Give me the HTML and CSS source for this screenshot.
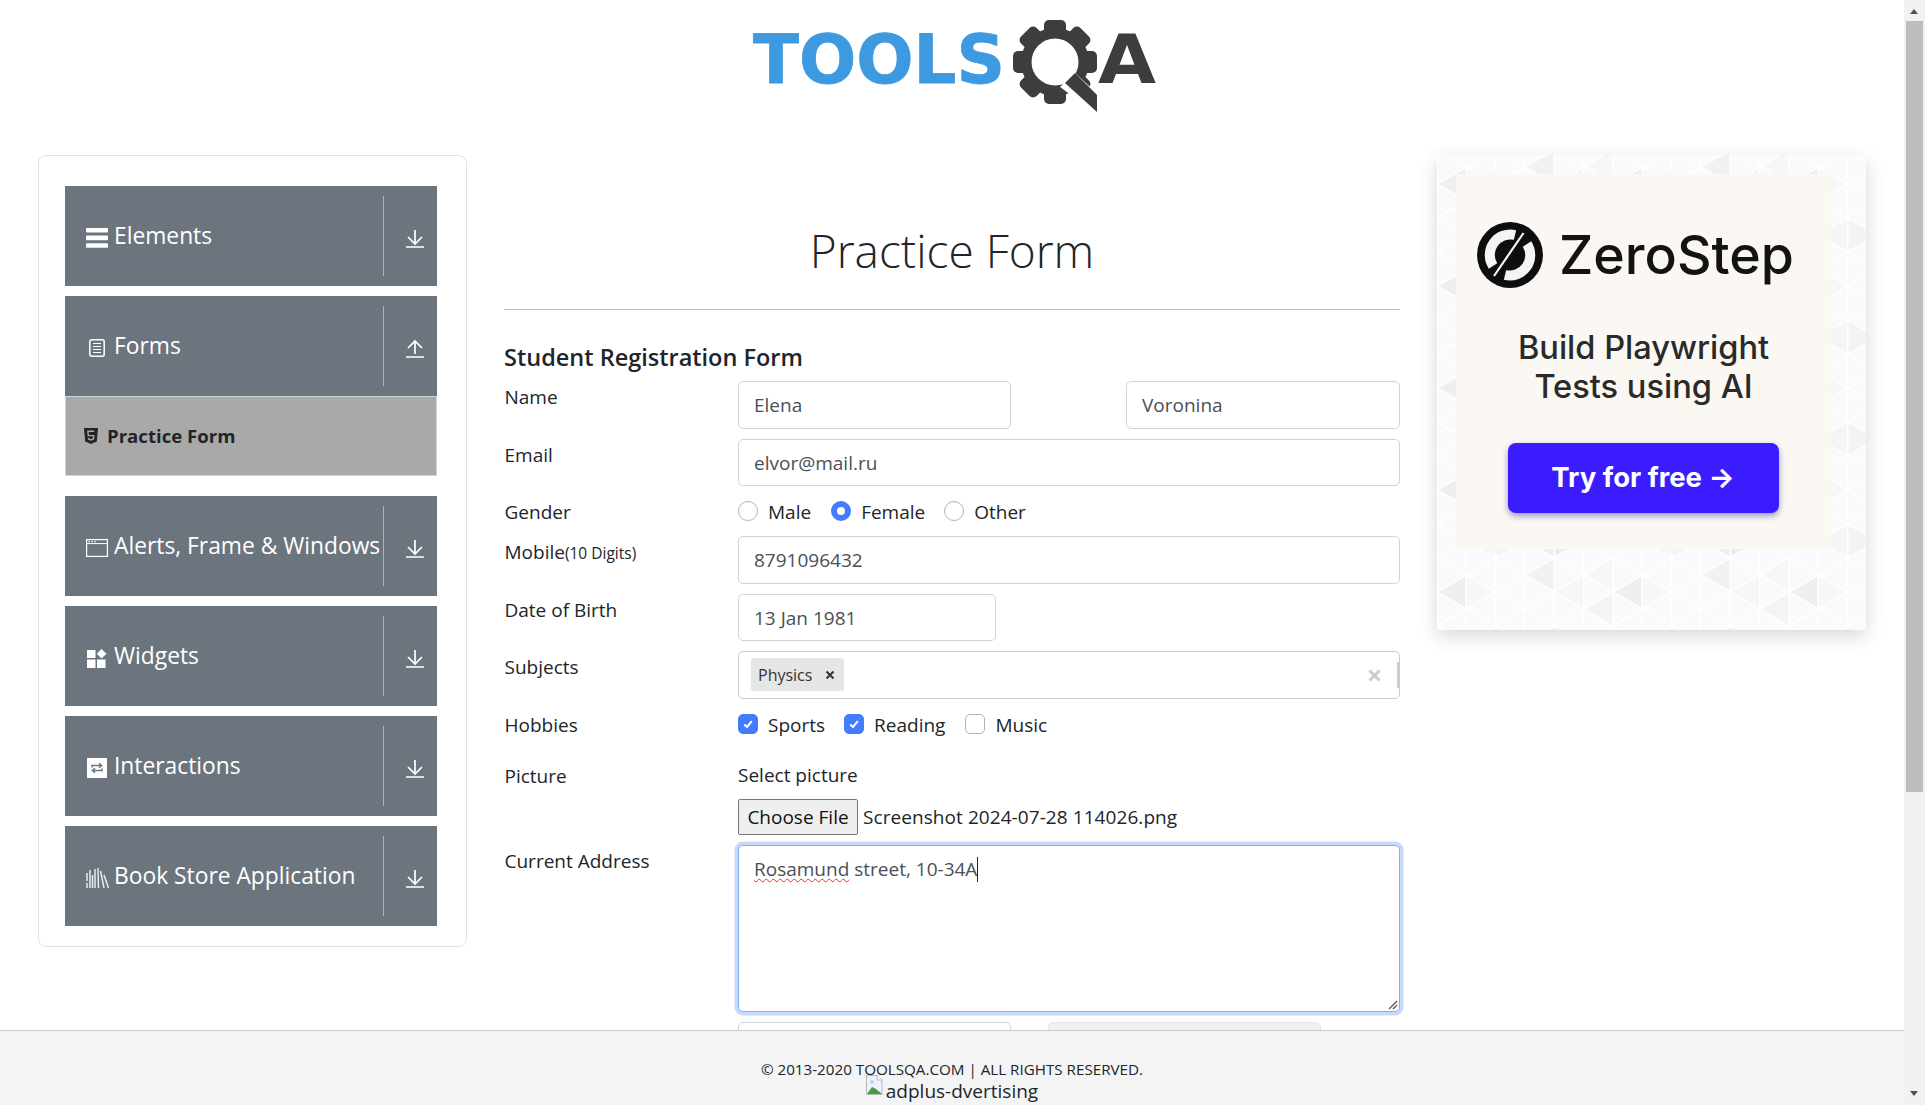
FILE: index.html
```html
<!DOCTYPE html>
<html lang="en">
<head>
<meta charset="utf-8">
<title>ToolsQA Practice Form</title>
<link rel="stylesheet" href="styles.css">
</head>
<body>
<div class="page">
  <header class="site-header">
    <svg class="logo" viewBox="0 0 420 125" width="420" height="125" aria-label="ToolsQA">
      <text class="logo-tools" x="11" y="83" textLength="252" lengthAdjust="spacingAndGlyphs">TOOLS</text>
      <g fill="#3d3d3d">
        <g id="teeth">
          <rect x="302" y="20" width="22" height="84" rx="5"/>
          <rect x="302" y="20" width="22" height="84" rx="5" transform="rotate(45 313 62)"/>
          <rect x="302" y="20" width="22" height="84" rx="5" transform="rotate(90 313 62)"/>
          <rect x="302" y="20" width="22" height="84" rx="5" transform="rotate(135 313 62)"/>
        </g>
        <circle cx="313" cy="62" r="34"/>
      </g>
      <circle cx="313" cy="62" r="23.5" fill="#fff"/>
      <polygon points="318,87 332,72 360,98 360,118" fill="#fff"/>
      <polygon points="323,83 333,73 355,95 355,112" fill="#3d3d3d"/>
      <text class="logo-a" x="356" y="83" textLength="58" lengthAdjust="spacingAndGlyphs">A</text>
    </svg>
  </header>

  <main class="layout">
    <nav class="sidebar">
      <div class="nav-item">
        <span class="nav-icon">
          <svg width="22" height="20" viewBox="0 0 22 20"><rect y="0" width="22" height="4.6" rx="1" fill="#fff"/><rect y="7.6" width="22" height="4.6" rx="1" fill="#fff"/><rect y="15.2" width="22" height="4.6" rx="1" fill="#fff"/></svg>
        </span>
        <span class="nav-label">Elements</span>
        <span class="nav-toggle">
          <svg class="arrow" width="18" height="19" viewBox="0 0 18 19"><path d="M0 18H18M9 1V14.5M2 8L9 15L16 8"/></svg>
        </span>
      </div>

      <div class="nav-item nav-item-open">
        <span class="nav-icon">
          <svg width="16" height="18" viewBox="0 0 16 18"><rect x=".8" y=".8" width="14.4" height="16.4" rx="2" fill="none" stroke="#fff" stroke-width="1.5"/><path d="M4 4.5H12M4 7.5H12M4 10.5H12M4 13.5H12" stroke="#fff" stroke-width="1"/></svg>
        </span>
        <span class="nav-label">Forms</span>
        <span class="nav-toggle">
          <svg class="arrow" width="18" height="19" viewBox="0 0 18 19"><path d="M0 18H18M9 15V2M2 9L9 2L16 9"/></svg>
        </span>
      </div>
      <div class="nav-sub">
        <svg width="14" height="16" viewBox="0 0 14 16"><path d="M0 0H14L12.8 13.4L7 16L1.2 13.4Z" fill="#212529"/><path d="M10.2 3.2H3.9L4.3 7.6H9.8L9.4 11L7 11.9L4.6 11L4.5 9.8" fill="none" stroke="#a9a9a9" stroke-width="1.4"/></svg>
        <span class="nav-sub-label">Practice Form</span>
      </div>

      <div class="nav-item nav-item-spaced">
        <span class="nav-icon">
          <svg width="22" height="18" viewBox="0 0 22 18"><rect x=".6" y=".6" width="20.8" height="16.8" fill="none" stroke="#fff" stroke-width="1.2"/><path d="M.6 4.6H21.4" stroke="#fff" stroke-width="1"/><path d="M2.5 2.6H4M5.5 2.6H7M8.5 2.6H10" stroke="#fff" stroke-width="1.2"/></svg>
        </span>
        <span class="nav-label">Alerts, Frame &amp; Windows</span>
        <span class="nav-toggle">
          <svg class="arrow" width="18" height="19" viewBox="0 0 18 19"><path d="M0 18H18M9 1V14.5M2 8L9 15L16 8"/></svg>
        </span>
      </div>

      <div class="nav-item">
        <span class="nav-icon">
          <svg width="20" height="19" viewBox="0 0 20 19"><rect y="1" width="8.5" height="8" fill="#fff"/><rect y="10.5" width="8.5" height="8.5" fill="#fff"/><rect x="10" y="10.5" width="8.5" height="8.5" fill="#fff"/><path d="M14.5 0L19.5 4.8L14.5 9.6L9.8 4.8Z" fill="#fff"/></svg>
        </span>
        <span class="nav-label">Widgets</span>
        <span class="nav-toggle">
          <svg class="arrow" width="18" height="19" viewBox="0 0 18 19"><path d="M0 18H18M9 1V14.5M2 8L9 15L16 8"/></svg>
        </span>
      </div>

      <div class="nav-item">
        <span class="nav-icon">
          <svg width="20" height="20" viewBox="0 0 20 20"><rect width="20" height="20" fill="#fff"/><path d="M5 9.5V7.5H14M12 5.3L14.6 7.5L12 9.7M15 10.5V12.5H6M8 10.3L5.4 12.5L8 14.7" fill="none" stroke="#6c757d" stroke-width="1.5"/></svg>
        </span>
        <span class="nav-label">Interactions</span>
        <span class="nav-toggle">
          <svg class="arrow" width="18" height="19" viewBox="0 0 18 19"><path d="M0 18H18M9 1V14.5M2 8L9 15L16 8"/></svg>
        </span>
      </div>

      <div class="nav-item">
        <span class="nav-icon">
          <svg width="23" height="20" viewBox="0 0 23 20"><path d="M1 5V13M1 15V20M4 2V20M6.5 7V20M9 1V20M12 0L12.5 20M14.5 3L18 20M18 7L22.5 20" fill="none" stroke="#e8eaec" stroke-width="1.5"/></svg>
        </span>
        <span class="nav-label">Book Store Application</span>
        <span class="nav-toggle">
          <svg class="arrow" width="18" height="19" viewBox="0 0 18 19"><path d="M0 18H18M9 1V14.5M2 8L9 15L16 8"/></svg>
        </span>
      </div>
    </nav>

    <section class="content">
      <h1 class="page-title">Practice Form</h1>
      <hr class="title-rule">
      <h5 class="form-title">Student Registration Form</h5>
      <form class="form">
        <div class="row">
          <label class="row-label">Name</label>
          <div class="name-pair">
            <input class="field name-field" type="text" value="Elena">
            <input class="field name-field-last" type="text" value="Voronina">
          </div>
        </div>
        <div class="row">
          <label class="row-label">Email</label>
          <input class="field" type="text" value="elvor@mail.ru">
        </div>
        <div class="row row-compact">
          <span class="row-label">Gender</span>
          <div class="options">
            <span class="option option-male"><i class="radio"></i>Male</span>
            <span class="option option-female"><i class="radio radio-on"></i>Female</span>
            <span class="option"><i class="radio"></i>Other</span>
          </div>
        </div>
        <div class="row">
          <label class="row-label">Mobile<small class="hint">(10 Digits)</small></label>
          <input class="field" type="text" value="8791096432">
        </div>
        <div class="row">
          <label class="row-label">Date of Birth</label>
          <input class="field date-field" type="text" value="13 Jan 1981">
        </div>
        <div class="row">
          <label class="row-label">Subjects</label>
          <div class="subjects">
            <span class="chip">Physics<svg class="chip-x" width="10" height="10" viewBox="0 0 10 10"><path d="M1.5 1.5L8.5 8.5M8.5 1.5L1.5 8.5" stroke="#333" stroke-width="2"/></svg></span>
            <svg class="clear-x" width="13" height="13" viewBox="0 0 13 13"><path d="M1.5 1.5L11.5 11.5M11.5 1.5L1.5 11.5" stroke="#ccc" stroke-width="3"/></svg>
            <i class="subjects-sep"></i>
          </div>
        </div>
        <div class="row row-hobbies">
          <span class="row-label">Hobbies</span>
          <div class="options">
            <span class="option option-sports"><i class="check check-on"><svg width="14" height="14" viewBox="0 0 14 14"><path d="M3.2 7.4L6 10L10.8 4.2" fill="none" stroke="#fff" stroke-width="2"/></svg></i>Sports</span>
            <span class="option option-reading"><i class="check check-on"><svg width="14" height="14" viewBox="0 0 14 14"><path d="M3.2 7.4L6 10L10.8 4.2" fill="none" stroke="#fff" stroke-width="2"/></svg></i>Reading</span>
            <span class="option"><i class="check"></i>Music</span>
          </div>
        </div>
        <div class="row row-picture">
          <span class="row-label">Picture</span>
          <div class="picture">
            <span class="picture-title">Select picture</span>
            <div class="file-line">
              <button class="file-button" type="button">Choose File</button>
              <span class="file-name">Screenshot 2024-07-28 114026.png</span>
            </div>
          </div>
        </div>
        <div class="row">
          <label class="row-label">Current Address</label>
          <div class="address">
            <span class="misspelled">Rosamund</span> street, 10-34A<i class="caret"></i>
            <svg class="grip" width="12" height="12" viewBox="0 0 12 12"><path d="M11 3L3 11M11 7L7 11" stroke="#555" stroke-width="1.2"/></svg>
          </div>
        </div>
        <div class="row">
          <span class="row-label"></span>
          <div class="state-pair">
            <div class="state-box"></div>
            <div class="state-box state-box-off"></div>
          </div>
        </div>
      </form>
    </section>

    <aside class="banner">
      <svg class="banner-pattern" width="429" height="475" aria-hidden="true">
        <defs>
          <pattern id="tri" width="176" height="102" patternUnits="userSpaceOnUse" y="-5">
            <rect width="176" height="102" fill="#fafafa"/>
            <polygon points="0,34 29.3,17 29.3,51" fill="#efefef"/>
            <polygon points="29.3,85 58.7,68 58.7,102" fill="#f5f5f5"/>
            <polygon points="58.7,68 88,85 58.7,102" fill="#f3f3f3"/>
            <polygon points="88,17 117.3,0 117.3,34" fill="#f1f1f1"/>
            <polygon points="117.3,34 146.7,17 146.7,51" fill="#f6f6f6"/>
            <polygon points="88,85 117.3,68 117.3,102" fill="#eeeeee"/>
            <polygon points="117.3,68 146.7,85 117.3,102" fill="#eeeeee"/>
            <polygon points="146.7,51 176,34 176,68" fill="#f4f4f4"/>
            <polygon points="146.7,17 176,0 176,34" fill="#f7f7f7"/>
            <polygon points="29.3,17 58.7,34 29.3,51" fill="#f7f7f7"/>
            <path d="M0 0V102M29.3 0V102M58.7 0V102M88 0V102M117.3 0V102M146.7 0V102M176 0V102M0 0L176 102M0 68L58.7 102M0 34L117.3 102M58.7 0L176 68M117.3 0L176 34M0 34L58.7 0M0 68L117.3 0M0 102L176 0M58.7 102L176 34M117.3 102L176 68" fill="none" stroke="#fff" stroke-width="1.6"/>
          </pattern>
        </defs>
        <rect width="429" height="475" fill="url(#tri)"/>
      </svg>
      <div class="ad-card">
        <div class="ad-brand">
          <svg width="66" height="66" viewBox="0 0 66 66">
            <circle cx="33" cy="33" r="33" fill="#0e0e0e"/>
            <path d="M38 13A20.500 20.500 0 0 0 16 44" fill="none" stroke="#f4f4f2" stroke-width="10"/>
            <path d="M28 53A20.500 20.500 0 0 0 50 22" fill="none" stroke="#f4f4f2" stroke-width="10"/>
            <path d="M48 10L18 56" stroke="#0e0e0e" stroke-width="7"/>
            <path d="M46.500 11L17 54" stroke="#f4f4f2" stroke-width="2.200"/>
          </svg>
          <span class="ad-name">ZeroStep</span>
        </div>
        <p class="ad-copy">Build Playwright<br>Tests using AI</p>
        <span class="ad-button">Try for free →</span>
      </div>
    </aside>
  </main>

  <footer class="site-footer">
    <span class="copyright">© 2013-2020 TOOLSQA.COM | ALL RIGHTS RESERVED.</span>
    <span class="ad-alt">
      <svg class="broken-image" width="20" height="20" viewBox="0 0 20 20"><path d="M.5 .5H11L16 5V19.500H.5Z" fill="#eef3fb" stroke="#b5b8bd"/><path d="M11 .5V5H16" fill="#fff" stroke="#b5b8bd"/><path d="M1 19L6 12L10 14L16 19Z" fill="#4a9e38"/><circle cx="6" cy="7" r="2" fill="#b9d3f5"/></svg>adplus-dvertising
    </span>
  </footer>
</div>
<div class="scrollbar" aria-hidden="true">
  <i class="sb-up"></i>
  <i class="sb-thumb"></i>
  <i class="sb-down"></i>
</div>
</body>
</html>
```

FILE: styles.css
```css
* { box-sizing: border-box; }
html, body { margin: 0; height: 100%; overflow: hidden; }
body {
  display: flex;
  font-family: "Open Sans", "Noto Sans", sans-serif;
  font-size: 19px;
  line-height: 30px;
  color: #212529;
  background: #fff;
}
.page { position: relative; width: 1904px; height: 1105px; overflow: hidden; flex: none; }

.site-header { height: 155px; display: flex; justify-content: center; }
.logo { display: block; }
.logo-tools { font-family: "DejaVu Sans", sans-serif; font-weight: 700; font-size: 68px; fill: #3d9ae0; stroke: #3d9ae0; stroke-width: .8px; }
.logo-a { font-family: "DejaVu Sans", sans-serif; font-weight: 700; font-size: 68px; fill: #3d3d3d; }

.layout { display: grid; grid-template-columns: 429px 896px 429px; column-gap: 37px; padding: 0 38px; align-items: start; }

.sidebar { height: 792px; padding: 30px 29px 0 26px; border: 1px solid #dee2e6; border-radius: 8px; }
.nav-item { display: flex; align-items: center; height: 100px; margin-bottom: 10px; padding-left: 21px; background: #6c757d; color: #fff; }
.nav-item-open { margin-bottom: 0; }
.nav-item-spaced { margin-top: 20px; }
.nav-icon { width: 28px; flex: none; display: flex; justify-content: center; margin-left: -3px; margin-top: 4px; }
.nav-icon svg { display: block; }
.nav-label { flex: 1; font-size: 22.8px; white-space: nowrap; margin-top: -1px; padding-left: 3px; }
.nav-toggle { width: 54px; height: 80px; flex: none; display: flex; align-items: center; justify-content: center; padding-left: 8px; padding-top: 5px; border-left: 1px solid rgba(255,255,255,.45); }
.arrow path { fill: none; stroke: #fff; stroke-width: 1.7; }
.nav-sub { display: flex; align-items: center; gap: 9px; height: 80px; padding-left: 18px; background: #a9a9a9; border: 1px solid #ced4da; font-weight: 700; font-size: 18.6px; }

.page-title { margin: 65px 0 0; font-size: 46px; line-height: 60px; font-weight: 300; text-align: center; color: #212529; }
.title-rule { margin: 29px 0 0; border: 0; border-top: 1px solid #bdbdbd; }
.form-title { margin: 32px 0 9px; font-size: 23.500px; line-height: 30px; font-weight: 600; color: #212529; }

.row { display: grid; grid-template-columns: 234px 662px; margin-bottom: 10px; }
.row-compact { height: 30px; }
.row-label { display: block; padding: 1px 0 0 .5px; }
.hint { font-size: 15.500px; }
.field { display: block; width: 100%; height: 47.500px; padding: 1px 15px 0; border: 1px solid #ced4da; border-radius: 5px; font: inherit; color: #495057; background: #fff; }
.name-pair { display: flex; justify-content: space-between; }
.name-field { width: 273px; }
.name-field-last { width: 274px; }
.date-field { width: 258px; }

.options { display: flex; align-items: center; }
.option { display: flex; align-items: center; gap: 10px; margin-right: 20px; padding-top: 1px; color: #212529; }
.radio, .check { display: flex; align-items: center; justify-content: center; width: 20px; height: 20px; background: #fff; border: 1px solid #adb5bd; }
.radio { border-radius: 50%; margin-top: -2px; }
.check { border-radius: 5px; margin-top: -2px; }
.radio-on { border: 6px solid #447bff; }
.check-on { background: #447bff; border-color: #447bff; }
.option-male { margin-right: 20px; }
.option-female { margin-right: 19px; }
.option-sports { margin-right: 19px; }
.option-reading { margin-right: 20px; }

.subjects { position: relative; display: flex; align-items: center; height: 47.500px; padding-left: 12px; border: 1px solid #ccc; border-radius: 5px; }
.chip { display: flex; align-items: center; width: 93px; height: 33px; padding-left: 7px; border-radius: 2px; background: #e6e6e6; font-size: 16px; color: #333; }
.chip-x { margin-left: auto; margin-right: 9px; }
.clear-x { position: absolute; right: 18px; top: 17px; }
.subjects-sep { position: absolute; right: 0; top: 10px; width: 2px; height: 26px; background: #ccc; }

.row-hobbies { height: 30px; margin-bottom: 21.500px; }
.row-picture { margin-bottom: 10px; }
.picture { display: flex; flex-direction: column; gap: 9px; }
.picture-title { display: block; }
.file-line { display: flex; align-items: center; gap: 5px; height: 36px; }
.file-button { width: 120px; height: 36px; padding: 0; border: 1px solid #767676; border-radius: 2px; background: #efefef; font: inherit; color: #111; }
.file-name { white-space: nowrap; letter-spacing: .07px; }

.address { position: relative; height: 167px; padding: 8px 15px; border: 1px solid #80b0f5; border-radius: 5px; box-shadow: 0 0 0 3.500px #c8dafc; color: #495057; background: #fff; }
.misspelled { text-decoration: underline wavy #e03030 1px; text-underline-offset: 2px; }
.caret { display: inline-block; width: 1px; height: 25px; vertical-align: -6px; background: #222; }
.grip { position: absolute; right: 1px; bottom: 1px; }

.state-pair { display: flex; gap: 37px; }
.state-box { width: 273px; height: 47.500px; border: 1px solid #ced4da; border-radius: 5px; background: #fff; }
.state-box-off { background: #f0f0f0; border-color: #e6e6e6; }

.banner { position: relative; height: 475px; padding: 19px 35px 0 19px; box-shadow: 0 6px 18px rgba(0,0,0,.16); }
.banner-pattern { position: absolute; left: 0; top: 0; display: block; }
.ad-card { position: relative; display: flex; flex-direction: column; align-items: center; height: 375px; padding-top: 48px; background: #fbf8f3; font-family: Inter, sans-serif; }
.ad-brand { display: flex; align-items: center; gap: 16px; align-self: flex-start; margin-left: 21px; height: 66px; }
.ad-brand svg { flex: none; }
.ad-name { font-size: 53.6px; line-height: 66px; font-weight: 500; color: #131313; }
.ad-copy { margin: 40px 0 0; font-size: 32.6px; line-height: 39px; font-weight: 500; text-align: center; color: #2a2a2a; }
.ad-button { display: flex; align-items: center; justify-content: center; width: 271px; height: 70px; margin-top: 37px; margin-left: -1px; padding-bottom: 2px; border-radius: 8px; background: #3a1cff; color: #fff; font-size: 27.500px; font-weight: 700; box-shadow: 0 3px 6px rgba(40,30,160,.45); }

.site-footer { position: absolute; left: 0; right: 0; top: 1030px; height: 75px; padding-top: 28px; display: flex; flex-direction: column; align-items: center; background: #f4f4f4; border-top: 1px solid #ccc; }
.copyright { font-size: 15.2px; line-height: 20px; }
.ad-alt { display: flex; align-items: flex-start; font-size: 19px; line-height: 22px; margin-top: 1px; }
.broken-image { flex: none; margin-top: -5px; }

.scrollbar { position: relative; width: 21px; height: 1105px; flex: none; background: #f1f1f1; }
.sb-thumb { position: absolute; left: 2px; top: 21px; width: 17px; height: 771px; background: #bdbdbd; }
.sb-up, .sb-down { position: absolute; left: 6px; width: 0; height: 0; border-left: 4.500px solid transparent; border-right: 4.500px solid transparent; }
.sb-up { top: 9px; border-bottom: 5px solid #505050; }
.sb-down { bottom: 9px; border-top: 5px solid #505050; }
```
